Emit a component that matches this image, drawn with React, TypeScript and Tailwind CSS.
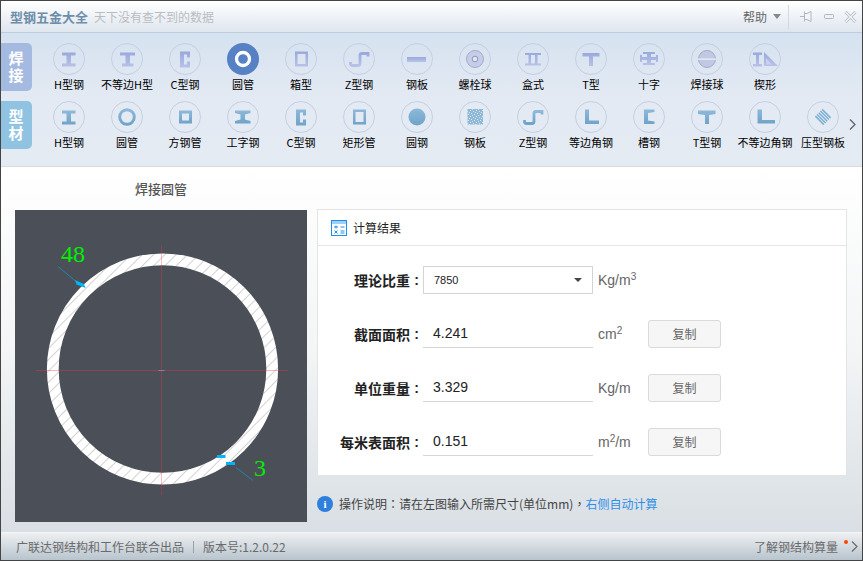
import type { ReactNode } from 'react';

const cjk = { fontFamily: '"Noto Sans CJK SC", "Liberation Sans", sans-serif' };
const latin = { fontFamily: '"Liberation Sans", sans-serif' };

type Item = { label: string; icon: ReactNode; active?: boolean };

const P = ({ d, fill }: { d: string; fill: string }) => <path d={d} fill={fill} fillRule="evenodd" />;

// section shapes, drawn in a 32x32 box
const H = 'M9 9.500h13.500v3h-4.500v8h4.500v3H9v-3h4.500v-8H9z';
const UH = 'M9 9.500h15v3h-5v8h3.500v3H11v-3h3.500v-8H9z';
const C = 'M11 8.500h10v6h-3v-3h-3v10h3v-3h3v6H11z';
const BOX = 'M10 8.500h13v15H10zM12.500 11v10h8V11z';
const Z = 'M7.500 19v1.500q0 2 2 2h5.500q2 0 2-2V12.500q0-2 2-2h6v3';

function row1(f: string): Item[] {
  return [
    { label: 'H型钢', icon: <P d={H} fill={f} /> },
    { label: '不等边H型', icon: <P d={UH} fill={f} /> },
    { label: 'C型钢', icon: <P d={C} fill={f} /> },
    { label: '圆管', active: true, icon: <circle cx="16" cy="16" r="6.500" fill="none" stroke="#fff" strokeWidth="3.300" /> },
    { label: '箱型', icon: <P d={BOX} fill={f} /> },
    { label: 'Z型钢', icon: <path d={Z} fill="none" stroke={f} strokeWidth="2.800" /> },
    { label: '钢板', icon: <rect x="6" y="14" width="19" height="5" fill={f} /> },
    {
      label: '螺栓球',
      icon: (
        <>
          <circle cx="16" cy="16" r="8.500" fill="#c5cdea" stroke="#a3aec4" />
          <circle cx="16" cy="16" r="2.800" fill="#dfe5f3" stroke="#8d98b5" />
        </>
      ),
    },
    { label: '盒式', icon: <P d="M8 10h16v2h-3.500v8.500H24v2H8v-2h3.500V12H8zM14 12v8.500h4V12z" fill={f} /> },
    { label: 'T型', icon: <P d="M7.500 10h17v3.500h-6.500V23h-4V13.500H7.500z" fill={f} /> },
    { label: '十字', icon: <P d="M10 9h12v2h-4v3h5v-2h2v7h-2v-2h-5v3h4v2H10v-2h4v-3H9v2H7v-7h2v2h5v-3h-4z" fill={f} /> },
    {
      label: '焊接球',
      icon: (
        <>
          <circle cx="16" cy="16" r="8.500" fill="#c0c8e4" stroke="#a3aec4" />
          <rect x="7" y="15.500" width="18" height="1.200" fill="#eef1f8" />
        </>
      ),
    },
    {
      label: '楔形',
      icon: (
        <>
          <P d="M4 9.500h9v2.500h-3v9h3v2.500H4V21h3v-9H4z" fill={f} />
          <path d="M15 9l14 14H15z" fill={f} />
          <path d="M17 15l6 6.500h-6z" fill="#c8d0ee" />
        </>
      ),
    },
  ];
}

function row2(f: string): Item[] {
  return [
    { label: 'H型钢', icon: <P d={H} fill={f} /> },
    { label: '圆管', icon: <circle cx="16" cy="16" r="7.300" fill="none" stroke={f} strokeWidth="2.900" /> },
    { label: '方钢管', icon: <P d="M10 9.500h13v13H10zM13 12.500v7h7v-7z" fill={f} /> },
    { label: '工字钢', icon: <P d="M8 9.500h15.500v2.500l-5.500 1.500v5l5.500 1.500v2.500H8V20l5.500-1.500v-5L8 12z" fill={f} /> },
    { label: 'C型钢', icon: <P d={C} fill={f} /> },
    { label: '矩形管', icon: <P d={BOX} fill={f} /> },
    { label: '圆钢', icon: <circle cx="16" cy="16" r="8.500" fill={f} /> },
    { label: '钢板', icon: <rect x="8.500" y="8" width="15.500" height="15.500" fill="url(#speckle)" /> },
    { label: 'Z型钢', icon: <path d={Z} fill="none" stroke={f} strokeWidth="2.800" /> },
    { label: '等边角钢', icon: <P d="M10 8.500h4V19.500h10V23H10z" fill={f} /> },
    { label: '槽钢', icon: <P d="M11 8.500h10.500v2.500l-6.500 1v7.500l6.500 1V23H11z" fill={f} /> },
    { label: 'T型钢', icon: <P d="M7 9.500h17.500V13l-6.500 1v9h-4v-9l-7-1z" fill={f} /> },
    { label: '不等边角钢', icon: <P d="M8.500 8.500H13V19h13v3.500H8.500z" fill={f} /> },
    {
      label: '压型钢板',
      icon: (
        <path
          d="M8.350 15.150l8.500 8.500M10.050 13.450l8.500 8.500M11.750 11.750l8.500 8.500M13.450 10.050l8.500 8.500M15.150 8.350l8.500 8.500"
          fill="none"
          stroke="#7fb0d4"
          strokeWidth="1.500"
        />
      ),
    },
  ];
}

function ShapeButton({ item }: { item: Item }) {
  return (
    <div className="flex w-[58px] shrink-0 flex-col items-center">
      <svg width="32" height="32" viewBox="0 0 32 32">
        {item.active ? (
          <circle cx="16" cy="16" r="16" fill="#5681c4" />
        ) : (
          <circle cx="16" cy="16" r="15.500" fill="none" stroke="#c3cfe2" />
        )}
        {item.icon}
      </svg>
      <span className="h-[18px] whitespace-nowrap text-[11px] leading-[18px] text-black">{item.label}</span>
    </div>
  );
}

function SideTab({ a, b, bg }: { a: string; b: string; bg: string }) {
  return (
    <div
      className={`-ml-px flex h-[48px] w-[32px] shrink-0 flex-col items-center justify-center rounded-r-[5px] font-['Liberation_Sans','Noto_Sans_CJK_SC',sans-serif] text-[15px] font-bold leading-[17px] text-white ${bg}`}
    >
      <span className="block">{a}</span>
      <span className="block">{b}</span>
    </div>
  );
}

function Label({ text }: { text: string }) {
  return (
    <div className="flex w-[105px] shrink-0 justify-end pr-[4px] text-[14px] font-bold text-[#222]">
      {text}
      <span className="w-[9px] text-right" style={latin}>:</span>
    </div>
  );
}

function Field({ label, unit, value }: { label: string; unit: ReactNode; value: string }) {
  return (
    <div className="mb-[26px] flex h-[28px] items-center">
      <Label text={label} />
      <div className="h-[28px] w-[170px] shrink-0 border-b border-[#d6d6d6] pl-[10px] text-[14px] leading-[27px] text-[#222]" style={latin}>
        {value}
      </div>
      <div className="w-[55px] shrink-0 pl-[5px] text-[14px] text-[#666]" style={latin}>
        {unit}
      </div>
      <button className="h-[28px] w-[73px] shrink-0 rounded-[3px] border border-[#dadada] bg-[#f6f6f6] text-[12px] text-[#666]">
        复制
      </button>
    </div>
  );
}

const Sup = ({ children }: { children: string }) => <sup className="text-[10px]">{children}</sup>;

function PipeDrawing() {
  return (
    <svg width="292" height="312" viewBox="0 0 292 312" className="block bg-[#4b4f57]">
      <defs>
        <pattern id="hatch" width="8" height="8" patternUnits="userSpaceOnUse" patternTransform="rotate(-45) translate(0 1)">
          <rect width="8" height="8" fill="#fff" />
          <rect width="8" height="1" fill="#d2d2d2" />
        </pattern>
      </defs>
      <circle cx="147.500" cy="159" r="109.700" fill="none" stroke="url(#hatch)" strokeWidth="11.800" />
      <path d="M21 160.500h252" stroke="#ff3048" strokeOpacity=".38" />
      <path d="M146.500 35v250" stroke="#ff3048" strokeOpacity=".32" />
      <path d="M143.500 160.500h6" stroke="#7b86a0" />
      <path d="M43 56.500l24 20" stroke="#1c93b8" strokeWidth=".8" />
      <path d="M60 70l9 4 1.500 4-9-3.500z" fill="#00b4f5" />
      <path d="M238 270.500l-17-13" stroke="#1c93b8" strokeWidth=".8" />
      <rect x="202" y="245" width="8.500" height="3" fill="#00b4f5" />
      <rect x="211" y="252" width="9" height="3" fill="#00b4f5" />
      <text x="46" y="52" fill="#00f000" fontSize="24" fontFamily='"Liberation Serif", serif'>48</text>
      <text x="239" y="266" fill="#00f000" fontSize="24" fontFamily='"Liberation Serif", serif'>3</text>
    </svg>
  );
}

export default function App() {
  const f1 = 'url(#steelA)';
  const f2 = 'url(#steelB)';
  return (
    <div className="flex h-[561px] w-[863px] flex-col overflow-hidden border border-[#444] bg-white" style={cjk}>
      <svg className="h-0 w-0 shrink-0">
        <defs>
          <linearGradient id="steelA" x1="0" y1="0" x2="0" y2="1">
            <stop offset="0" stopColor="#9aa8dc" />
            <stop offset="1" stopColor="#b8c2e8" />
          </linearGradient>
          <linearGradient id="steelB" x1="0" y1="0" x2="0" y2="1">
            <stop offset="0" stopColor="#8db9da" />
            <stop offset="1" stopColor="#6fa3c8" />
          </linearGradient>
          <pattern id="speckle" width="6" height="6" patternUnits="userSpaceOnUse">
            <rect width="6" height="6" fill="#8fb9d8" />
            <rect width="1" height="1" fill="#dbe8f1" />
            <rect x="3" y="1" width="1" height="1" fill="#dbe8f1" />
            <rect x="1" y="2" width="1" height="1" fill="#cfe0ec" />
            <rect x="5" y="3" width="1" height="1" fill="#dbe8f1" />
            <rect x="2" y="4" width="1" height="1" fill="#cfe0ec" />
            <rect x="4" y="5" width="1" height="1" fill="#dbe8f1" />
          </pattern>
        </defs>
      </svg>

      {/* title bar */}
      <div className="flex h-[32px] shrink-0 items-center border-b border-[#bccddd] bg-gradient-to-b from-white to-[#dfe6ef] pl-[9px]">
        <span className="text-[13px] font-bold text-[#6d8ea8]">型钢五金大全</span>
        <span className="ml-[6px] text-[12px] text-[#b9bdc1]">天下没有查不到的数据</span>
        <div className="ml-auto flex items-center">
          <span className="text-[12px] text-[#666]">帮助</span>
          <svg width="8" height="5" viewBox="0 0 8 5" className="ml-[6px]">
            <path d="M0 0h8L4 5z" fill="#888" />
          </svg>
          <div className="ml-[7px] h-[24px] w-px bg-[#d3dae2]" />
          <svg width="12" height="13" viewBox="0 0 12 13" className="ml-[11px]">
            <path d="M0 6.500h4M4.500 1.500v10M5 3.500h2l4-2v10l-4-2H5" fill="#f2f5f8" stroke="#aeb8c2" />
          </svg>
          <svg width="10" height="5" viewBox="0 0 10 5" className="ml-[12px]">
            <rect x=".5" y=".5" width="9" height="4" rx="1" fill="#eef1f5" stroke="#aeb8c2" />
          </svg>
          <svg width="13" height="12" viewBox="0 0 13 12" className="ml-[10px] mr-[5px]">
            <path d="M1.500 1l10 10M11.500 1l-10 10" fill="none" stroke="#b4bec8" strokeWidth="3" />
            <path d="M1.500 1l10 10M11.500 1l-10 10" fill="none" stroke="#f4f6f8" strokeWidth="1.200" />
          </svg>
        </div>
      </div>

      {/* shape toolbar */}
      <div className="h-[134px] shrink-0 border-b border-[#d8dce0] bg-gradient-to-b from-[#d6e2f0] via-[#e3eaf3] to-[#e5ebf3] pt-[10px]">
        <div className="flex h-[58px]">
          <SideTab a="焊" b="接" bg="bg-[#a5bae0]" />
          <div className="ml-[8px] flex">
            {row1(f1).map((item) => (
              <ShapeButton key={item.label} item={item} />
            ))}
          </div>
        </div>
        <div className="flex h-[58px]">
          <SideTab a="型" b="材" bg="bg-[#90c3e1]" />
          <div className="ml-[8px] flex">
            {row2(f2).map((item) => (
              <ShapeButton key={item.label} item={item} />
            ))}
          </div>
          <svg width="7" height="11" viewBox="0 0 7 11" className="-ml-[3px] mt-[18px] shrink-0">
            <path d="M1 .5l5 5-5 5" fill="none" stroke="#55606c" strokeWidth="1.200" />
          </svg>
        </div>
      </div>

      {/* main area */}
      <div className="flex min-h-0 flex-1 bg-gradient-to-b from-white via-[#f3f5f6] to-[#d9dfe4] pl-[14px]">
        <div className="w-[292px] shrink-0">
          <div className="flex h-[43px] items-center justify-center text-[13px] font-medium text-[#555]">焊接圆管</div>
          <PipeDrawing />
        </div>
        <div className="ml-[10px] w-[530px] shrink-0">
          <div className="mt-[42px] h-[267px] border border-[#e2e4e6] bg-white">
            <div className="flex h-[36px] items-center border-b border-[#e6e6e6] pl-[13px]">
              <svg width="16" height="16" viewBox="0 0 16 16">
                <rect x=".5" y=".5" width="15" height="15" fill="#fff" stroke="#1e8fee" />
                <rect x="1" y="1" width="14" height="3" fill="#9fd0f7" />
                <path d="M3 7h4M5 5.500v3M9.500 7h4M3.500 10.500l3 3M6.500 10.500l-3 3M9.500 11h4M9.500 13h4" stroke="#1e8fee" />
              </svg>
              <span className="ml-[6px] text-[12px] text-[#222]">计算结果</span>
            </div>
            <div className="pt-[20px]">
              <div className="mb-[26px] flex h-[28px] items-center">
                <Label text="理论比重" />
                <div className="flex h-[28px] w-[170px] shrink-0 items-center justify-between border border-[#d4d4d4] px-[10px] text-[11px] text-[#222]" style={latin}>
                  7850
                  <svg width="8" height="4" viewBox="0 0 8 4">
                    <path d="M0 0h8L4 4z" fill="#444" />
                  </svg>
                </div>
                <div className="pl-[5px] text-[14px] text-[#666]" style={latin}>
                  Kg/m<Sup>3</Sup>
                </div>
              </div>
              <Field label="截面面积" value="4.241" unit={<>cm<Sup>2</Sup></>} />
              <Field label="单位重量" value="3.329" unit="Kg/m" />
              <Field label="每米表面积" value="0.151" unit={<>m<Sup>2</Sup>/m</>} />
            </div>
          </div>
          <div className="mt-[19px] flex items-center">
            <div className="flex h-[16px] w-[16px] items-center justify-center rounded-full bg-[#2f7fdc] text-[11px] font-bold text-white" style={{ fontFamily: '"Liberation Serif", serif' }}>
              i
            </div>
            <span className="ml-[6px] text-[12px] text-[#444]">
              操作说明<span className="font-['Noto_Sans_CJK_TC']">：</span>请在左图输入所需尺寸(单位mm)<span className="font-['Noto_Sans_CJK_TC']">，</span>
            </span>
            <span className="text-[12px] text-[#2f8fe8]">右侧自动计算</span>
          </div>
        </div>
      </div>

      {/* status bar */}
      <div className="flex h-[28px] shrink-0 items-center border-t border-[#f2f4f5] bg-gradient-to-b from-[#eef0f2] to-[#b8c4cd] pl-[15px] text-[12px] text-[#6a6a6a]">
        <span>广联达钢结构和工作台联合出品</span>
        <div className="mx-[9px] h-[12px] w-px bg-[#9aa2a8]" />
        <span>版本号:1.2.0.22</span>
        <span className="ml-auto">了解钢结构算量</span>
        <div className="mb-[10px] ml-[6px] h-[4px] w-[4px] shrink-0 rounded-full bg-[#ff4500]" />
        <svg width="7" height="11" viewBox="0 0 7 11" className="ml-[3px] mr-[4px]">
          <path d="M1 .5l5 5-5 5" fill="none" stroke="#666" strokeWidth="1.100" />
        </svg>
      </div>
    </div>
  );
}
